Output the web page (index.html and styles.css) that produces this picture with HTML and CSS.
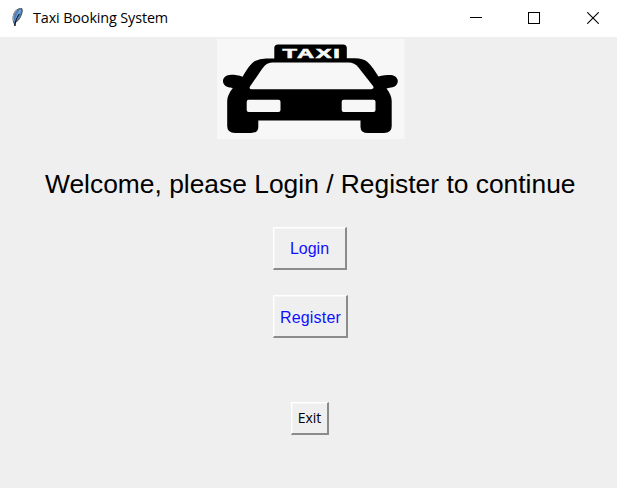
FILE: index.html
```html
<!DOCTYPE html>
<html lang="en">
<head>
<meta charset="utf-8">
<title>Taxi Booking System</title>
<link rel="stylesheet" href="styles.css">
</head>
<body>
<header class="titlebar">
  <svg class="feather" width="16" height="20" viewBox="0 0 16 20">
    <path d="M5.200 16.500C3 12 4 6 7.500 3C9 2 11 1.400 12.900 1.600C14 4 12.500 9 9.500 13L6.500 15.500L5.800 18.800Z" fill="#4f80b8" stroke="#4b4f55" stroke-width="1"/>
    <path d="M5 14C3.400 10 5 5 8 2.800" fill="none" stroke="#a9aaa9" stroke-width="1"/>
    <path d="M11.500 3C10 5 8.500 8 7 12.500" fill="none" stroke="#7fb2e5" stroke-width="1.300"/>
    <path d="M10.200 7C8 10 6.500 13 5.800 19" fill="none" stroke="#151b24" stroke-width="1.200"/>
  </svg>
  <span class="title">Taxi Booking System</span>
  <div class="controls">
    <svg width="12" height="12" shape-rendering="crispEdges"><path d="M0 5.500H12" stroke="#000"/></svg>
    <svg width="12" height="12" shape-rendering="crispEdges"><rect x=".5" y=".5" width="11" height="11" fill="none" stroke="#000"/></svg>
    <svg class="close" width="12" height="12"><path d="M.3 .3L11.700 11.700M11.700 .3L.3 11.700" stroke="#000" stroke-width="1.100"/></svg>
  </div>
</header>
<main class="content">
  <svg class="taxi" width="188" height="100" viewBox="217 39 188 100">
    <rect x="217" y="39" width="187.500" height="100" fill="#f7f7f7"/>
    <path d="M274.300 58.500V48Q274.300 44.500 278 44.500H343Q346.800 44.500 346.800 48V58.300H355Q363 58.300 367.500 62C371.500 65.500 375 71 378.500 76.500C382 75.300 387 75 391 75C395 75.500 397.800 78 397.800 81.300C397.800 85 394 87.800 389.500 87.800L386.500 88.500C390 93 391.700 97 391.700 101V126Q391.700 133 384 133H368Q360.500 133 360.500 127V120.600H258.300V127Q258.300 133 251 133H235Q227.200 133 227.200 126V101C227.200 97 229 93 232.800 88L230 87.600C226 87 223 84.500 223 81C223 77.500 226.500 74.700 231 74.700C235 74.700 239 75.300 242.600 76.700C246 71 250 64 255 61Q260 58.300 267 58.500Z"/>
    <path d="M250 86.500L262 69Q266.500 62.600 272 62.600H348.500Q354.500 62.600 358.500 67.500L373 86Q375 89.300 369.500 89.300H252Q248.600 89.300 250 86.500Z" fill="#f7f7f7"/>
    <rect x="246.700" y="99.700" width="33.800" height="12.300" rx="2" fill="#f7f7f7"/>
    <rect x="341.700" y="99.700" width="33.800" height="12.300" rx="2" fill="#f7f7f7"/>
    <text class="sign" x="282.500" y="58" textLength="59" lengthAdjust="spacingAndGlyphs">TAXI</text>
  </svg>
  <h1 class="welcome"><svg width="540" height="40"><text x="4" y="27" textLength="530.500" lengthAdjust="spacingAndGlyphs">Welcome, please Login / Register to continue</text></svg></h1>
  <button class="btn login">Login</button>
  <button class="btn register">Register</button>
  <button class="btn exit">Exit</button>
</main>
</body>
</html>
```
FILE: styles.css
```css
* { box-sizing: border-box; }
body {
  margin: 0;
  height: 488px;
  overflow: hidden;
  background: #efefef;
  font-family: "Liberation Sans", Arial, sans-serif;
}
svg { display: block; }
.titlebar {
  display: flex;
  align-items: center;
  height: 37px;
  padding: 0 18px 0 9px;
  background: #fff;
}
.feather { margin-bottom: 3px; }
.title {
  margin: 0 0 2px 8px;
  font: 14.4px/20px "Open Sans", "Noto Sans", sans-serif;
  letter-spacing: -0.13px;
  color: #000;
}
.controls {
  display: flex;
  gap: 46px;
  margin: 0 0 1px auto;
}
.close { margin-left: 1px; }
.content {
  display: flex;
  flex-direction: column;
  align-items: center;
  padding: 2px 0 0 5px;
}
.sign {
  font-size: 13.5px;
  font-weight: bold;
  letter-spacing: 1px;
  fill: #f7f7f7;
  stroke: #f7f7f7;
  stroke-width: 0.6px;
}
.welcome {
  margin: 27px 0 0;
  font-size: 26px;
  font-weight: normal;
}
.btn {
  padding: 0;
  border: solid;
  border-width: 1px 2px 2px 1px;
  border-color: #fff #8b8b8b #8b8b8b #fff;
  box-shadow: inset 1px 1px #f6f6f6;
  background: #efefef;
  color: #1010ff;
  font-family: inherit;
  font-size: 16px;
}
.login { width: 74px; height: 43px; margin: 21px 2px 0 0; padding-top: 2px; }
.register {
  width: 75px;
  height: 43px;
  margin: 25px 1px 0 0;
  padding: 4px 0 0 1px;
  letter-spacing: 0.2px;
}
.exit {
  width: 38px;
  height: 33px;
  margin: 64px 3px 0 0;
  padding: 0 0 2px 1px;
  color: #000;
  font: 14px "Open Sans", "Noto Sans", sans-serif;
}
```
